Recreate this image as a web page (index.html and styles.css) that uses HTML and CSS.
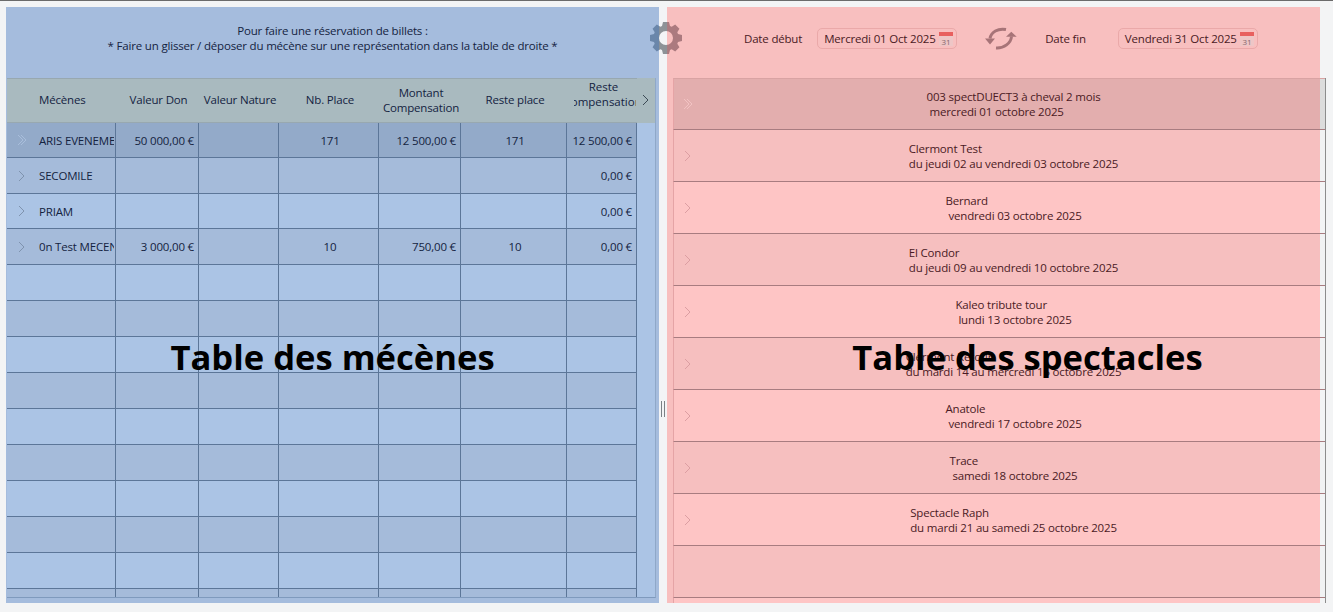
FILE: index.html
```html
<!DOCTYPE html>
<html lang="fr">
<head>
    <meta charset="UTF-8">
    <title>Réservation de billets</title>
    <link rel="stylesheet" href="styles.css">
</head>
<body>
    <div class="window">
        <div class="panel panel-left">
            <div class="help">
                <p>Pour faire une réservation de billets :</p>
                <p>* Faire un glisser / déposer du mécène sur une représentation dans la table de droite *</p>
            </div>
            <div class="grid-left">
                <table class="sponsors">
                    <colgroup>
                        <col class="c-arrow"><col class="c-name"><col class="c-don"><col class="c-nature">
                        <col class="c-place"><col class="c-comp"><col class="c-rest"><col class="c-restcomp">
                    </colgroup>
                    <thead>
                        <tr>
                            <th></th>
                            <th class="left">Mécènes</th>
                            <th>Valeur Don</th>
                            <th>Valeur Nature</th>
                            <th>Nb. Place</th>
                            <th>Montant Compensation</th>
                            <th>Reste place</th>
                            <th class="th-clip"><div class="clip"><span class="clip-in">Reste<br>compensation</span></div></th>
                        </tr>
                    </thead>
                    <tbody>
                        <tr class="selected short"><td class="arrow"><svg class="chev" viewBox="0 0 10 12"><path d="M1 1l5 5-5 5"/><path d="M4 1l5 5-5 5"/></svg></td><td><div class="name">ARIS EVENEMENT</div></td><td class="num">50 000,00 €</td><td></td><td class="mid">171</td><td class="num">12 500,00 €</td><td class="mid">171</td><td class="num">12 500,00 €</td></tr>
                        <tr><td class="arrow"><svg class="chev" viewBox="0 0 10 12"><path d="M2 1l5 5-5 5"/></svg></td><td><div class="name">SECOMILE</div></td><td></td><td></td><td></td><td></td><td></td><td class="num">0,00 €</td></tr>
                        <tr class="short"><td class="arrow"><svg class="chev" viewBox="0 0 10 12"><path d="M2 1l5 5-5 5"/></svg></td><td><div class="name">PRIAM</div></td><td></td><td></td><td></td><td></td><td></td><td class="num">0,00 €</td></tr>
                        <tr><td class="arrow"><svg class="chev" viewBox="0 0 10 12"><path d="M2 1l5 5-5 5"/></svg></td><td><div class="name">0n Test MECENE</div></td><td class="num">3 000,00 €</td><td></td><td class="mid">10</td><td class="num">750,00 €</td><td class="mid">10</td><td class="num">0,00 €</td></tr>
                        <tr><td></td><td></td><td></td><td></td><td></td><td></td><td></td><td></td></tr>
                        <tr><td></td><td></td><td></td><td></td><td></td><td></td><td></td><td></td></tr>
                        <tr><td></td><td></td><td></td><td></td><td></td><td></td><td></td><td></td></tr>
                        <tr><td></td><td></td><td></td><td></td><td></td><td></td><td></td><td></td></tr>
                        <tr><td></td><td></td><td></td><td></td><td></td><td></td><td></td><td></td></tr>
                        <tr><td></td><td></td><td></td><td></td><td></td><td></td><td></td><td></td></tr>
                        <tr><td></td><td></td><td></td><td></td><td></td><td></td><td></td><td></td></tr>
                        <tr><td></td><td></td><td></td><td></td><td></td><td></td><td></td><td></td></tr>
                        <tr><td></td><td></td><td></td><td></td><td></td><td></td><td></td><td></td></tr>
                        <tr class="tiny"><td></td><td></td><td></td><td></td><td></td><td></td><td></td><td></td></tr>
                    </tbody>
                </table>
                <svg class="chev-more" viewBox="0 0 10 12"><path d="M2 1l5 5-5 5"/></svg>
            </div>
            <div class="overlay-label">Table des mécènes</div>
        </div>

        <div class="splitter"><span class="grip"></span></div>

        <div class="panel panel-right">
            <div class="dates">
                <span class="date-label">Date début</span>
                <div class="date-input">
                    Mercredi 01 Oct 2025
                    <svg class="cal" viewBox="0 0 14 14"><rect x="0" y="3" width="14" height="11" fill="#eec6c6"/><rect x="0" y="0" width="14" height="4" fill="#e8605f"/><text x="7" y="12.6" text-anchor="middle">31</text></svg>
                </div>
                <svg class="refresh" viewBox="0 0 32 23">
                    <path d="M5 11.500C6 5 13 1 21 2.500"/>
                    <path d="M26.500 9.500C26 16 19 21.500 11 21"/>
                    <path class="head" d="M0 11.500h10l-5 6zM21 9.700h10.700l-5.400-5z"/>
                </svg>
                <span class="date-label date-label-end">Date fin</span>
                <div class="date-input">
                    Vendredi 31 Oct 2025
                    <svg class="cal" viewBox="0 0 14 14"><rect x="0" y="3" width="14" height="11" fill="#eec6c6"/><rect x="0" y="0" width="14" height="4" fill="#e8605f"/><text x="7" y="12.6" text-anchor="middle">31</text></svg>
                </div>
            </div>
            <div class="grid-right">
                <div class="show selected"><svg class="chev" viewBox="0 0 10 12"><path d="M1 1l5 5-5 5"/><path d="M4 1l5 5-5 5"/></svg><div class="show-text"><div><span>003 spectDUECT3 à cheval 2 mois</span><span class="single">mercredi 01 octobre 2025</span></div></div></div>
                <div class="show dark"><svg class="chev" viewBox="0 0 10 12"><path d="M2 1l5 5-5 5"/></svg><div class="show-text"><div><span>Clermont Test</span><span>du jeudi 02 au vendredi 03 octobre 2025</span></div></div></div>
                <div class="show"><svg class="chev" viewBox="0 0 10 12"><path d="M2 1l5 5-5 5"/></svg><div class="show-text"><div><span>Bernard</span><span class="single">vendredi 03 octobre 2025</span></div></div></div>
                <div class="show dark"><svg class="chev" viewBox="0 0 10 12"><path d="M2 1l5 5-5 5"/></svg><div class="show-text"><div><span>El Condor</span><span>du jeudi 09 au vendredi 10 octobre 2025</span></div></div></div>
                <div class="show"><svg class="chev" viewBox="0 0 10 12"><path d="M2 1l5 5-5 5"/></svg><div class="show-text"><div><span>Kaleo tribute tour</span><span class="single">lundi 13 octobre 2025</span></div></div></div>
                <div class="show dark"><svg class="chev" viewBox="0 0 10 12"><path d="M2 1l5 5-5 5"/></svg><div class="show-text"><div><span>Clermont Retour</span><span>du mardi 14 au mercredi 15 octobre 2025</span></div></div></div>
                <div class="show"><svg class="chev" viewBox="0 0 10 12"><path d="M2 1l5 5-5 5"/></svg><div class="show-text"><div><span>Anatole</span><span class="single">vendredi 17 octobre 2025</span></div></div></div>
                <div class="show dark"><svg class="chev" viewBox="0 0 10 12"><path d="M2 1l5 5-5 5"/></svg><div class="show-text"><div><span>Trace</span><span class="single">samedi 18 octobre 2025</span></div></div></div>
                <div class="show"><svg class="chev" viewBox="0 0 10 12"><path d="M2 1l5 5-5 5"/></svg><div class="show-text"><div><span>Spectacle Raph</span><span>du mardi 21 au samedi 25 octobre 2025</span></div></div></div>
                <div class="show dark"></div>
                <div class="show tail"></div>
            </div>
            <div class="overlay-label">Table des spectacles</div>
        </div>

        <svg class="gear" viewBox="0 0 32 32">
            <defs>
                <linearGradient id="gearFill" x1="0" y1="0" x2="1" y2="0">
                    <stop offset="0.27" stop-color="#6a86aa"/>
                    <stop offset="0.3" stop-color="#8d9297"/>
                    <stop offset="0.52" stop-color="#8d9297"/>
                    <stop offset="0.55" stop-color="#ab7a7f"/>
                </linearGradient>
            </defs>
            <path fill="url(#gearFill)" fill-rule="evenodd" d="M12 4L13 0H19L20 4L21.660 4.690L25.190 2.560L29.440 6.810L27.310 10.340L28 12L32 13V19L28 20L27.310 21.660L29.440 25.190L25.190 29.440L21.660 27.310L20 28L19 32H13L12 28L10.340 27.310L6.810 29.440L2.560 25.190L4.690 21.660L4 20L0 19V13L4 12L4.690 10.340L2.560 6.810L6.810 2.560L10.340 4.690ZM16 9a7 7 0 1 0 0 14a7 7 0 1 0 0-14z"/>
        </svg>
    </div>
</body>
</html>
```

FILE: styles.css
```css
* {
    box-sizing: border-box;
}

html, body {
    margin: 0;
    height: 100%;
    overflow: hidden;
}

body {
    background-color: #f3f4f5;
    border-top: 1px solid #6b6b6b;
    color: #14233f;
    font-family: 'Open Sans', 'Noto Sans', sans-serif;
    font-size: 11.5px;
    letter-spacing: -0.18px;
}

.window {
    display: flex;
    position: relative;
    padding: 6px 0 0 6px;
    height: 602px;
}

.panel {
    width: 653px;
    height: 596px;
    position: relative;
    display: flex;
    flex-direction: column;
}

.panel-left {
    background-color: #a5bcdd;
}

.panel-right {
    background-color: #f8bfbf;
    color: #4a1a24;
}

.splitter {
    width: 8px;
    padding-top: 394px;
    display: flex;
    align-items: flex-start;
    justify-content: center;
    background-color: #f3f4f6;
}

.grip {
    width: 4px;
    height: 16px;
    border-left: 1px solid #7b8186;
    border-right: 1px solid #7b8186;
}

/* left side */
.help {
    height: 71px;
    padding-top: 16px;
    text-align: center;
    line-height: 15px;
}

.help p {
    margin: 0;
}

.grid-left {
    margin-left: 1px;
    width: 649px;
    height: 520px;
    background: linear-gradient(#a9babf 45px, #abc4e5 45px);
    border-right: 1px solid #8fa8c8;
    border-bottom: 1px solid #7f9abd;
    overflow: hidden;
    position: relative;
}

.sponsors {
    table-layout: fixed;
    border-collapse: separate;
    border-spacing: 0;
    width: 630px;
}

.c-arrow { width: 25px; }
.c-name { width: 84px; }
.c-don { width: 83px; }
.c-nature { width: 80px; }
.c-place { width: 100px; }
.c-comp { width: 82px; }
.c-rest { width: 106px; }
.c-restcomp { width: 70px; }

.sponsors th {
    height: 45px;
    padding: 0 1px 2px 3px;
    background-color: #a9babf;
    border-top: 1px solid #98a8b0;
    border-bottom: 1px solid #98a8b0;
    font-weight: normal;
    text-align: center;
    line-height: 15px;
    overflow: hidden;
}

.sponsors th.left {
    text-align: left;
    padding-left: 7px;
}

.sponsors th.th-clip {
    padding: 0 1px 13px 7px;
}

.clip {
    overflow: hidden;
}

.clip-in {
    display: block;
    white-space: nowrap;
    letter-spacing: 0;
    margin: 0 -20px 0 -23px;
}

.sponsors td {
    height: 36px;
    padding: 0 4px;
    border-right: 1px solid #5c7698;
    border-bottom: 1px solid #5c7698;
    background-color: #abc4e5;
    overflow: hidden;
    white-space: nowrap;
}

.sponsors td:first-child {
    border-right: none;
}

.sponsors tr:nth-child(even) td {
    background-color: #a5bbda;
}

.sponsors tr.selected td {
    background-color: #93aac9;
}

.sponsors tr.short td {
    height: 35px;
}

.sponsors tr.tiny td {
    height: 10px;
    border-bottom: none;
}

.sponsors td.arrow {
    padding: 0 0 0 10px;
}

.name {
    padding-left: 3px;
    overflow: hidden;
    margin-right: -3px;
}

.num {
    text-align: right;
}

.mid {
    text-align: center;
}

.sponsors td.mid {
    padding: 0 2px 0 5px;
}

.chev {
    width: 10px;
    height: 12px;
    display: block;
    flex: none;
}

.chev path, .chev-more path {
    fill: none;
    stroke: #7f93ae;
    stroke-width: 1;
}

.selected .chev path {
    stroke: #a9bedb;
}

.chev-more {
    position: absolute;
    top: 16px;
    right: 4px;
    width: 10px;
    height: 12px;
}

.chev-more path {
    stroke: #3c4a55;
}

/* right side */
.dates {
    height: 71px;
    padding: 0 0 8px 77px;
    display: flex;
    align-items: center;
}

.date-label {
    margin-right: 15px;
}

.date-label-end {
    margin-right: 32px;
}

.date-input {
    width: 140px;
    height: 21px;
    padding-left: 6px;
    display: flex;
    align-items: center;
    justify-content: space-between;
    border: 1px solid #eaa9a9;
    border-radius: 5px;
    white-space: nowrap;
}

.cal {
    width: 14px;
    height: 14px;
    margin-right: 3px;
    margin-top: 1px;
}

.cal text {
    font-family: 'Open Sans', sans-serif;
    font-size: 8px;
    fill: #86666c;
}

.refresh {
    width: 32px;
    height: 23px;
    margin: 0 28px;
}

.refresh path {
    fill: none;
    stroke: #a77478;
    stroke-width: 3;
}

.refresh path.head {
    fill: #a77478;
    stroke: none;
}

.grid-right {
    margin-left: 6px;
    margin-right: -6px;
    border-right: 1px solid #8c8c8c;
    height: 529px;
    overflow: hidden;
    background-color: #f3f4f5;
}

.show {
    height: 52px;
    padding: 1px 0 0 9px;
    display: flex;
    align-items: center;
    background: linear-gradient(to right, #fec5c5 646px, #f3f4f5 646px);
    border-bottom: 1px solid #a87c80;
    border-left: 1px solid #e5a4a6;
}

.show.dark {
    background: linear-gradient(to right, #f6bfbf 646px, #f1f2f3 646px);
}

.show.selected {
    padding-top: 0;
    background: linear-gradient(to right, #e3aeae 646px, #dcdcdc 646px);
    border-top: 1px solid #d9a3a3;
}

.show.tail {
    height: 10px;
    background: linear-gradient(#fec5c5 5px, #f3f4f5 5px) no-repeat;
    background-size: 646px 100%;
    border-bottom: 1px solid #bdbdbd;
}

.show-text {
    margin-left: 9px;
    flex: 1;
    display: flex;
    justify-content: center;
    line-height: 15px;
}

.show-text span {
    display: block;
    white-space: nowrap;
}

.show-text span.single {
    padding-left: 3px;
}

.show .chev path {
    stroke: #dc9ea2;
}

.show.selected .chev path {
    stroke: #f2c3c3;
}

/* big captions and the gear lie over the tables */
.overlay-label {
    position: absolute;
    top: 327px;
    left: 0;
    width: 100%;
    text-align: center;
    font-size: 34.6px;
    font-weight: bold;
    line-height: 46px;
    letter-spacing: 0;
    color: #000;
    font-family: 'Open Sans', sans-serif;
}

.panel-right .overlay-label {
    left: 34px;
}

.gear {
    position: absolute;
    left: 650px;
    top: 21px;
    width: 32px;
    height: 32px;
}
```
